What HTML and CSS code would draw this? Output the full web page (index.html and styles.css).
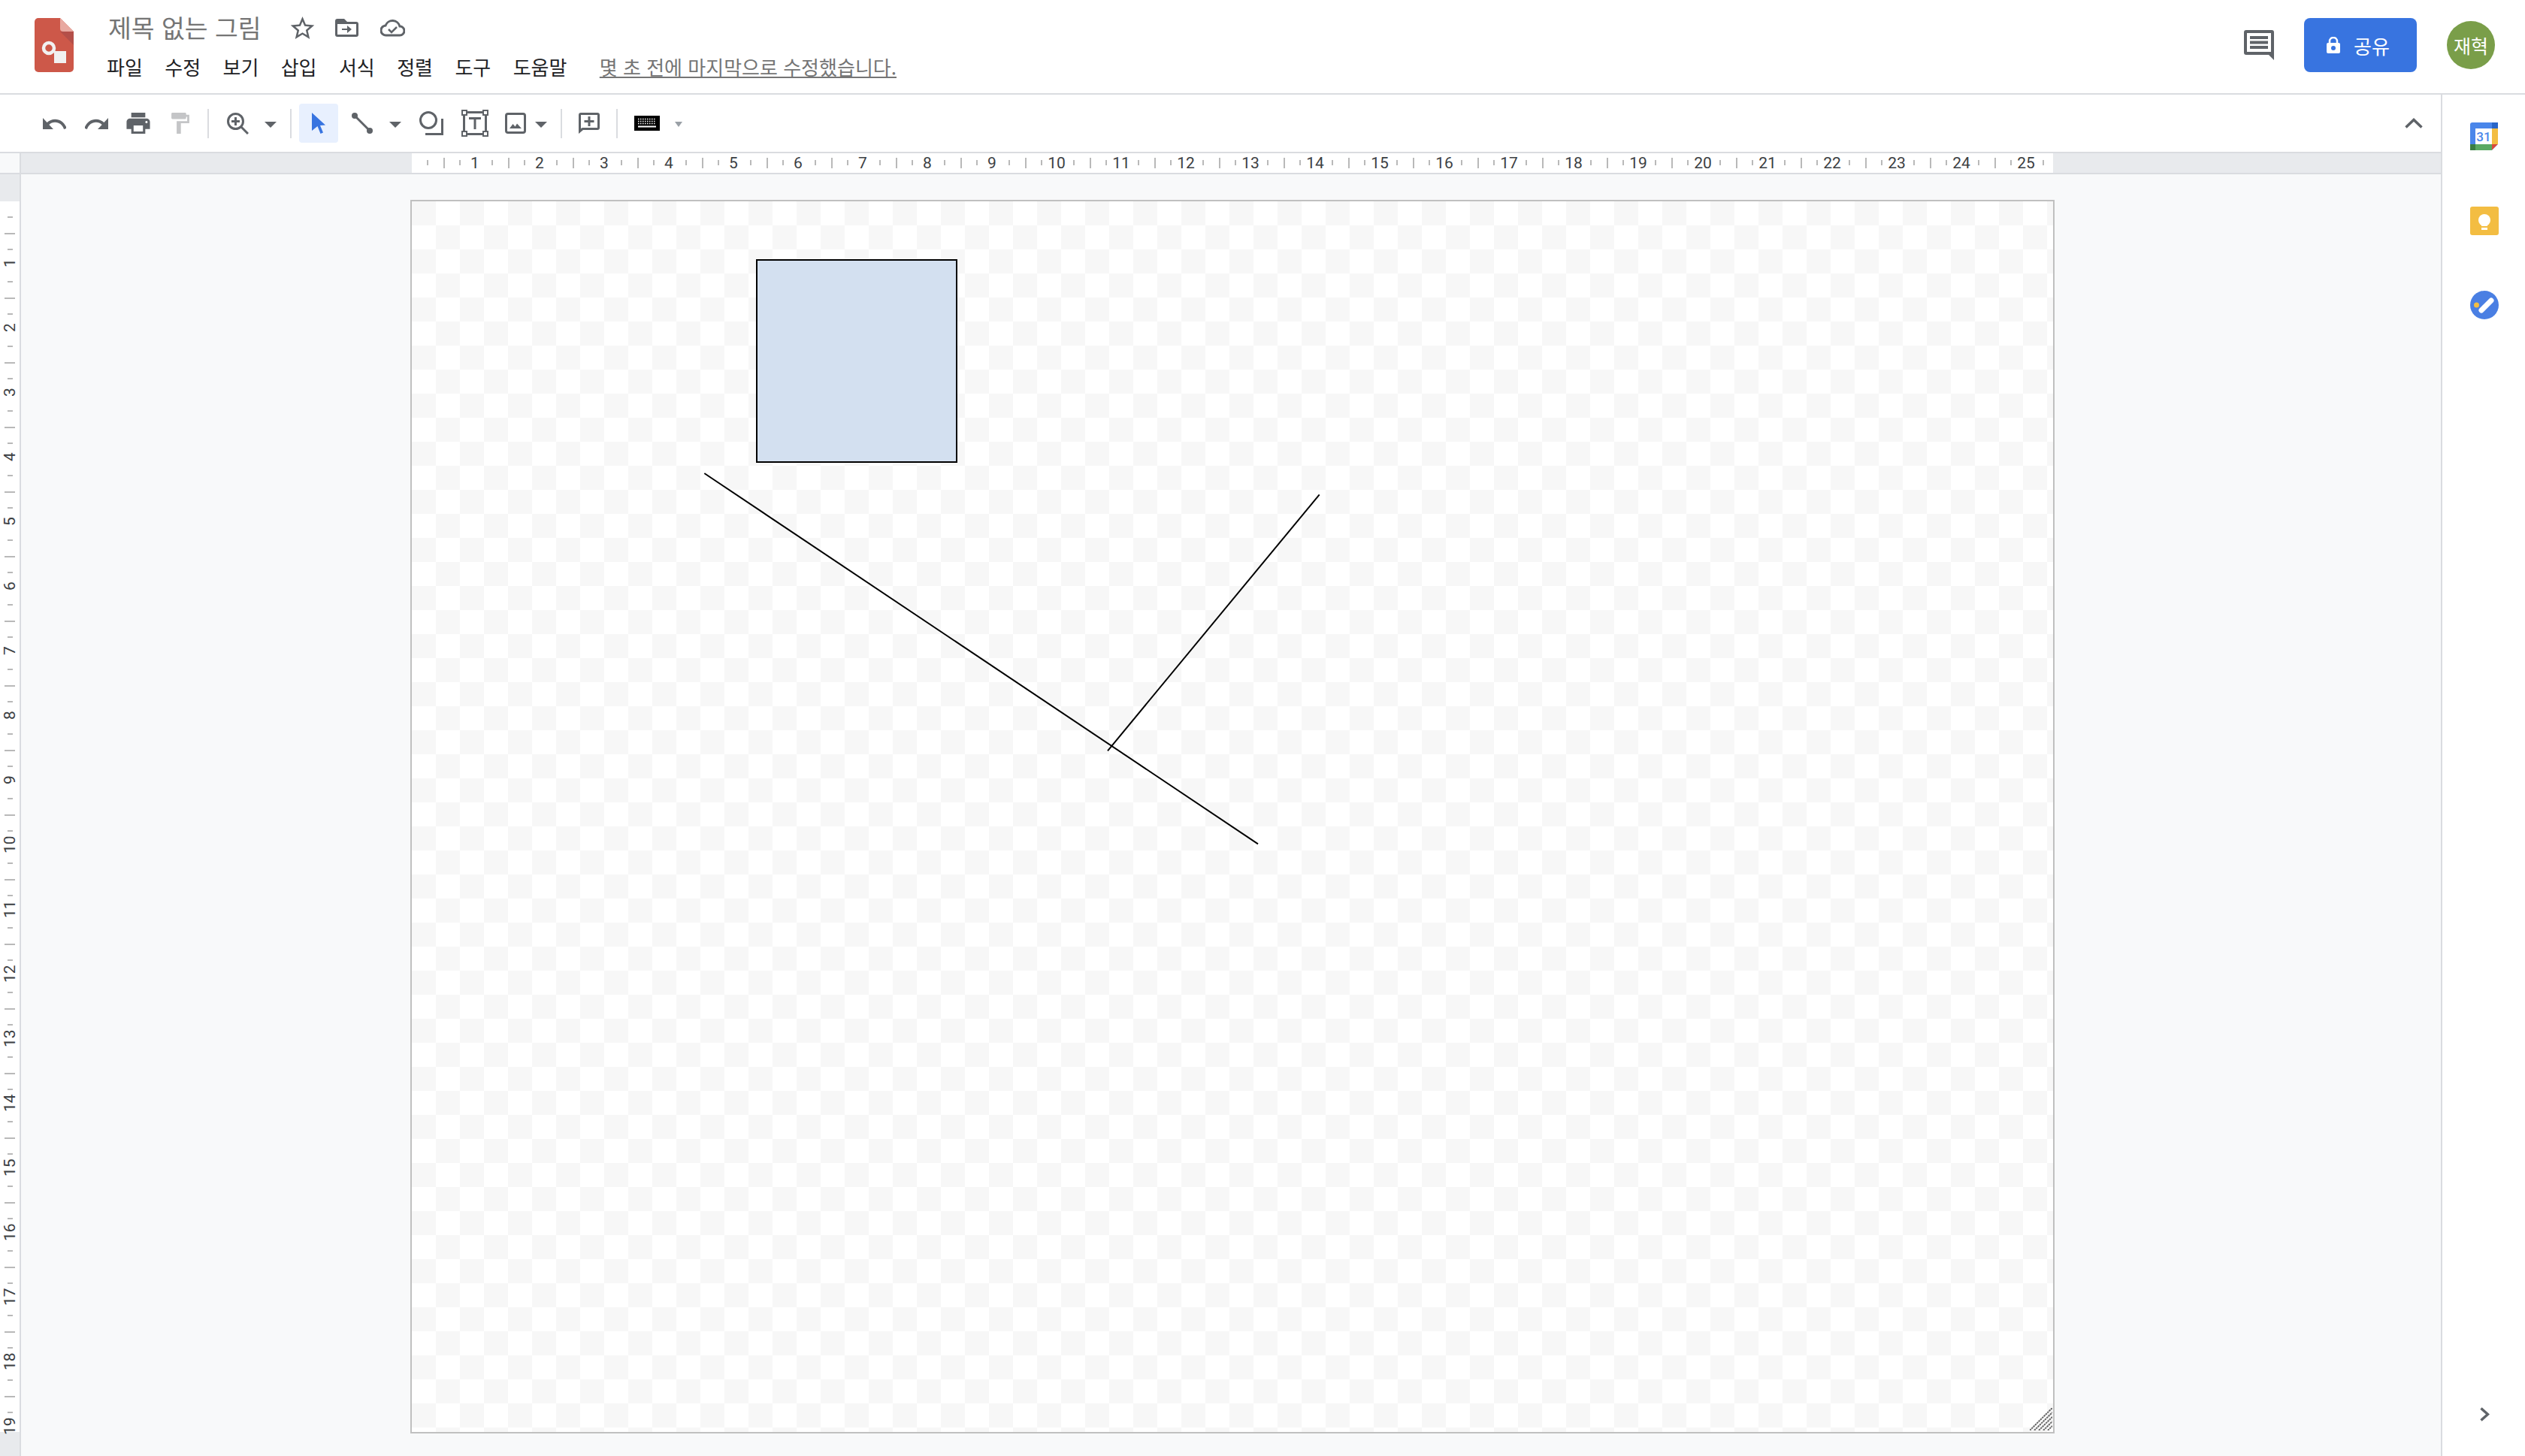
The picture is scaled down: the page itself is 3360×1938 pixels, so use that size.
FILE: index.html
```html
<!DOCTYPE html>
<html lang="ko">
<head>
    <meta charset="UTF-8">
    <title>제목 없는 그림 - Google Drawings</title>
    <link rel="stylesheet" href="styles.css">
</head>
<body>
    <header class="topbar">
        <svg class="logo" width="52" height="72" viewBox="0 0 52 72">
            <path fill="#cd5849" d="M5 0h29l18 18v49a5 5 0 0 1-5 5H5a5 5 0 0 1-5-5V5a5 5 0 0 1 5-5z"/>
            <path fill="#b44f49" d="M34 18h18v18z"/>
            <path fill="#e8a9a1" d="M34 0l18 18H38a4 4 0 0 1-4-4z"/>
            <circle cx="19" cy="40" r="7" fill="none" stroke="#f1f1f1" stroke-width="4.5"/>
            <rect x="26" y="44" width="16" height="16" fill="#f1f1f1"/>
        </svg>
        <div class="doc-info">
            <div class="title-row">
                <span class="doc-title">제목 없는 그림</span>
                <svg class="title-star" width="33" height="30" viewBox="2 2 20 19"><path class="ic" d="M22 9.24l-7.19-.62L12 2 9.19 8.63 2 9.24l5.46 4.73L5.82 21 12 17.27 18.18 21l-1.63-7.03L22 9.24zM12 15.4l-3.76 2.27 1-4.28-3.32-2.88 4.38-.38L12 6.1l1.71 4.04 4.38.38-3.32 2.88 1 4.28L12 15.4z"/></svg>
                <svg class="title-folder" width="31" height="24" viewBox="0 0 31 24">
                    <path class="ic" fill-rule="evenodd" d="M3 0h9l4 4h12a3 3 0 0 1 3 3v14a3 3 0 0 1-3 3H3a3 3 0 0 1-3-3V3a3 3 0 0 1 3-3zM3 7v14h25V7z"/>
                    <path class="ic" d="M9 13h7v-4l6 5-6 5v-4H9z"/>
                </svg>
                <svg class="title-cloud" width="33" height="24" viewBox="0 0 33 24">
                    <path fill="none" stroke="#5f6368" stroke-width="3" d="M8 22a6.5 6.5 0 0 1-1-13 10 10 0 0 1 19 1 6 6 0 0 1 0 12z"/>
                    <path fill="none" stroke="#5f6368" stroke-width="2.5" d="M11 14l4 4 7-7"/>
                </svg>
            </div>
            <nav class="menu">
                <span>파일</span><span>수정</span><span>보기</span><span>삽입</span><span>서식</span><span>정렬</span><span>도구</span><span>도움말</span>
                <a class="last-edit">몇 초 전에 마지막으로 수정했습니다.</a>
            </nav>
        </div>
        <div class="top-actions">
            <svg width="40" height="40" viewBox="0 0 40 40">
                <path class="ic" fill-rule="evenodd" d="M3 0h34a3 3 0 0 1 3 3v37l-7-7H3a3 3 0 0 1-3-3V3a3 3 0 0 1 3-3zM4 4v25h32V4z"/>
                <rect class="ic" x="8" y="8" width="24" height="4"/>
                <rect class="ic" x="8" y="14.500" width="24" height="4"/>
                <rect class="ic" x="8" y="21" width="24" height="4"/>
            </svg>
            <button class="share-btn">
                <svg width="18" height="22" viewBox="0 0 18 22">
                    <path fill="none" stroke="#fff" stroke-width="2.500" d="M4 9V6a5 5 0 0 1 10 0v3"/>
                    <rect y="8" width="18" height="14" rx="2" fill="#fff"/>
                    <circle cx="9" cy="15" r="3" fill="#3874e0"/>
                </svg>
                <span>공유</span>
            </button>
            <div class="avatar">재혁</div>
        </div>
    </header>

    <div class="below">
        <div class="main">
            <div class="toolbar">
                <div class="tool"><svg width="31" height="15" viewBox="2 7 20 9" preserveAspectRatio="none"><path class="ic" d="M12.500 8c-2.650 0-5.050.99-6.900 2.600L2 7v9h9l-3.620-3.620c1.390-1.160 3.160-1.880 5.120-1.880 3.540 0 6.550 2.310 7.600 5.500l2.370-.78C21.080 11.030 17.150 8 12.500 8z"/></svg></div>
                <div class="tool"><svg width="31" height="15" viewBox="2 7 20 9" preserveAspectRatio="none"><path class="ic" d="M18.400 10.600C16.550 8.990 14.150 8 11.500 8c-4.650 0-8.580 3.030-9.960 7.220L3.900 16c1.050-3.190 4.050-5.500 7.600-5.500 1.950 0 3.730.72 5.120 1.880L13 16h9V7l-3.600 3.600z"/></svg></div>
                <div class="tool"><svg width="32" height="28" viewBox="2 3 20 18"><path class="ic" d="M19 8H5c-1.660 0-3 1.340-3 3v6h4v4h12v-4h4v-6c0-1.660-1.340-3-3-3zm-3 11H8v-5h8v5zm3-7c-.55 0-1-.45-1-1s.45-1 1-1 1 .45 1 1-.45 1-1 1zm-1-9H6v4h12V3z"/></svg></div>
                <div class="tool"><svg width="26" height="28" viewBox="4 2 17 20"><path fill="#c4c5c7" d="M18 4V3c0-.55-.45-1-1-1H5c-.55 0-1 .45-1 1v4c0 .55.45 1 1 1h12c.55 0 1-.45 1-1V6h1v4H9v12h4V12h8V4h-3z"/></svg></div>
                <div class="sep"></div>
                <div class="tool"><svg width="29" height="29" viewBox="0 0 29 29">
                    <circle cx="11.500" cy="11.500" r="10" fill="none" stroke="#5f6368" stroke-width="3"/>
                    <path fill="none" stroke="#5f6368" stroke-width="3" d="M19 19l9 9M6 11.500h11M11.500 6v11"/>
                </svg></div>
                <svg class="caret" width="16" height="8" viewBox="0 0 16 8"><path class="ic" d="M0 0h16L8 8z"/></svg>
                <div class="sep sep-after-caret"></div>
                <div class="tool tool-active"><svg width="18" height="28" viewBox="0 0 18 28"><path fill="#3874e0" d="M0 0l18 16.500-7 .5 4 9.500-3.500 1.500-4-10L0 24z"/></svg></div>
                <div class="tool tool-line"><svg width="28" height="28" viewBox="0 0 28 28">
                    <path stroke="#5f6368" stroke-width="3" d="M4 4l20 20"/>
                    <circle class="ic" cx="4" cy="4" r="4"/>
                    <circle class="ic" cx="24" cy="24" r="4"/>
                </svg></div>
                <svg class="caret" width="16" height="8" viewBox="0 0 16 8"><path class="ic" d="M0 0h16L8 8z"/></svg>
                <div class="tool tool-shape"><svg width="32" height="32" viewBox="0 0 32 32">
                    <circle cx="12" cy="12" r="10.500" fill="none" stroke="#5f6368" stroke-width="3"/>
                    <path fill="none" stroke="#5f6368" stroke-width="3" d="M30.500 10v20.500H8"/>
                </svg></div>
                <div class="tool tool-text"><svg width="36" height="36" viewBox="0 0 36 36">
                    <rect x="3.500" y="3.500" width="29" height="29" fill="none" stroke="#5f6368" stroke-width="3"/>
                    <g fill="#fff" stroke="#5f6368" stroke-width="2">
                        <rect x="1" y="1" width="6" height="6"/>
                        <rect x="29" y="1" width="6" height="6"/>
                        <rect x="1" y="29" width="6" height="6"/>
                        <rect x="29" y="29" width="6" height="6"/>
                    </g>
                    <rect class="ic" x="10" y="10" width="16" height="3"/>
                    <rect class="ic" x="16.500" y="10" width="3" height="16"/>
                </svg></div>
                <div class="tool tool-image"><svg width="28" height="28" viewBox="0 0 28 28">
                    <rect x="1.500" y="1.500" width="25" height="25" rx="2.500" fill="none" stroke="#5f6368" stroke-width="3"/>
                    <path class="ic" d="M6 21l4.500-6 3 3.500 2.500-4 6 6.500z"/>
                </svg></div>
                <svg class="caret caret-image" width="16" height="8" viewBox="0 0 16 8"><path class="ic" d="M0 0h16L8 8z"/></svg>
                <div class="sep"></div>
                <div class="tool tool-comment"><svg width="28" height="28" viewBox="0 0 28 28">
                    <path class="ic" fill-rule="evenodd" d="M3 0h22a3 3 0 0 1 3 3v17a3 3 0 0 1-3 3H6l-6 5V3a3 3 0 0 1 3-3zM3 3v18l2-1h20V3z"/>
                    <path class="ic" d="M12.500 5h3v5h5v3h-5v5h-3v-5h-5v-3h5z"/>
                </svg></div>
                <div class="sep"></div>
                <div class="tool tool-keys"><svg width="34" height="20" viewBox="0 0 34 20">
                    <rect width="34" height="20"/>
                    <g stroke="#fff" stroke-width="1.500" stroke-dasharray="1.500 1.500">
                        <path d="M5 4.500h24M5 7.500h24M5 10.500h24"/>
                    </g>
                    <rect x="5" y="13.500" width="24" height="2" fill="#fff"/>
                </svg></div>
                <svg class="caret caret-keys" width="10" height="7" viewBox="0 0 10 7"><path fill="#9aa0a6" d="M0 0h10L5 7z"/></svg>
                <svg class="collapse" width="24" height="14" viewBox="0 0 24 14"><path fill="none" stroke="#5f6368" stroke-width="3.500" d="M1.500 12.500L12 2.500l10.500 10"/></svg>
            </div>

            <div class="ruler-row">
                <div class="ruler-corner"></div>
                <div class="ruler-h">
                    <span>1</span><span>2</span><span>3</span><span>4</span><span>5</span><span>6</span><span>7</span><span>8</span><span>9</span><span>10</span><span>11</span><span>12</span><span>13</span><span>14</span><span>15</span><span>16</span><span>17</span><span>18</span><span>19</span><span>20</span><span>21</span><span>22</span><span>23</span><span>24</span><span>25</span>
                </div>
            </div>

            <div class="work">
                <div class="ruler-v-wrap">
                    <div class="ruler-v">
                        <span>1</span><span>2</span><span>3</span><span>4</span><span>5</span><span>6</span><span>7</span><span>8</span><span>9</span><span>10</span><span>11</span><span>12</span><span>13</span><span>14</span><span>15</span><span>16</span><span>17</span><span>18</span><span>19</span>
                    </div>
                </div>
                <div class="workspace">
                    <div class="canvas">
                        <svg class="drawing" viewBox="0 0 2184 1638">
                            <rect x="459" y="78" width="266" height="269" fill="#d3e0f0" stroke="#000" stroke-width="2"/>
                            <line x1="389.300" y1="362" x2="1126" y2="855.300" stroke="#000" stroke-width="2"/>
                            <line x1="1207.700" y1="390.300" x2="926" y2="731.300" stroke="#000" stroke-width="2"/>
                        </svg>
                        <svg class="resize" width="30" height="30" viewBox="0 0 30 30">
                            <path fill="none" stroke="#666" stroke-width="2" stroke-dasharray="2.500 .8" d="M0 30L30 0M6 30L30 6M12 30L30 12M18 30L30 18M24 30L30 24"/>
                        </svg>
                    </div>
                </div>
            </div>
        </div>

        <aside class="side">
            <svg width="38" height="38" viewBox="0 0 38 38">
                <rect width="37" height="37" rx="3" fill="#4a86ea"/>
                <rect x="29" y="0" width="8" height="8" fill="#2a66c8"/>
                <rect x="29" y="8" width="8" height="21" fill="#f3bd42"/>
                <rect x="7" y="29" width="22" height="8" fill="#5aa962"/>
                <rect x="0" y="29" width="7" height="8" fill="#3a7e43"/>
                <path fill="#d9493c" d="M29 29h8l-8 8z"/>
                <path fill="#fff" d="M37 29v8h-8z"/>
                <rect x="7" y="8" width="22" height="21" fill="#fff"/>
                <text class="cal-num" x="18" y="25">31</text>
            </svg>
            <svg width="38" height="38" viewBox="0 0 38 38">
                <rect width="38" height="38" rx="3" fill="#f3bd42"/>
                <circle cx="19" cy="18" r="8" fill="#fff"/>
                <rect x="15" y="22" width="8" height="4" fill="#fff"/>
                <rect x="15" y="28" width="8" height="3" fill="#fff"/>
            </svg>
            <svg width="38" height="38" viewBox="0 0 38 38">
                <circle cx="19" cy="19" r="19" fill="#4a7fe3"/>
                <path stroke="#fff" stroke-width="7" stroke-linecap="round" d="M15 26l13-13"/>
                <circle cx="8.500" cy="19" r="3.500" fill="#f3bd42"/>
            </svg>
            <svg class="side-more" width="13" height="19" viewBox="0 0 13 19"><path fill="none" stroke="#5f6368" stroke-width="3.500" d="M1.500 1.500l9 8-9 8"/></svg>
        </aside>
    </div>
</body>
</html>
```

FILE: styles.css
```css
* {
    box-sizing: border-box;
}
html, body {
    margin: 0;
    height: 100%;
    overflow: hidden;
}
body {
    display: flex;
    flex-direction: column;
    height: 1938px;
    background: #fff;
    font-family: "Noto Sans CJK KR", "Liberation Sans", sans-serif;
}
svg {
    display: block;
    flex-shrink: 0;
}
.ic {
    fill: #5f6368;
}

/* top bar */
.topbar {
    height: 126px;
    flex-shrink: 0;
    display: flex;
    border-bottom: 2px solid #dadce0;
    padding-left: 46px;
}
.logo {
    margin-top: 24px;
}
.doc-info {
    margin-left: 44px;
    display: flex;
    flex-direction: column;
}
.title-row {
    display: flex;
    align-items: center;
    height: 40px;
    margin-top: 16px;
    padding-left: 2px;
}
.doc-title {
    font-size: 33.500px;
    line-height: 40px;
    color: #757575;
    width: 242px;
    white-space: nowrap;
}
.title-star {
    margin-top: 2px;
}
.title-folder {
    margin-left: 27px;
    margin-top: 2px;
}
.title-cloud {
    margin-left: 29px;
    margin-top: 2px;
}
.menu {
    display: flex;
    align-items: center;
    gap: 29.400px;
    margin-top: 15px;
    font-size: 26px;
    line-height: 36px;
    color: #202124;
}
.last-edit {
    margin-left: 14px;
    color: #757575;
    font-size: 26px;
    text-decoration: underline;
    white-space: nowrap;
}
.top-actions {
    margin-left: auto;
    display: flex;
    align-items: center;
    height: 124px;
    padding-right: 40px;
    padding-bottom: 4px;
}
.share-btn {
    width: 150px;
    height: 72px;
    margin-left: 40px;
    background: #3874e0;
    border: none;
    border-radius: 8px;
    color: #fff;
    font-family: inherit;
    font-size: 26px;
    display: flex;
    align-items: center;
    justify-content: flex-start;
    gap: 18px;
    padding: 0 0 0 30px;
}
.avatar {
    width: 64px;
    height: 64px;
    margin-left: 40px;
    border-radius: 50%;
    background: #7a9e49;
    color: #fff;
    font-size: 25px;
    display: flex;
    align-items: center;
    justify-content: center;
}

.below {
    flex: 1;
    display: flex;
    min-height: 0;
}
.main {
    flex: 1;
    display: flex;
    flex-direction: column;
    min-width: 0;
}

/* toolbar */
.toolbar {
    height: 78px;
    flex-shrink: 0;
    display: flex;
    align-items: center;
    padding-left: 42px;
    padding-right: 24px;
    border-bottom: 2px solid #dadce0;
}
.tool {
    width: 52px;
    height: 52px;
    margin-left: 4px;
    border-radius: 4px;
    display: flex;
    align-items: center;
    justify-content: center;
}
.tool-active {
    margin-left: 2px;
    background: #e8f0fe;
}
.tool-line {
    margin-left: 6px;
}
.tool-shape {
    margin-left: 6px;
}
.tool-text {
    margin-left: 6px;
}
.tool-image {
    width: 44px;
    margin-left: 6px;
}
.tool-comment {
    margin-left: 2px;
}
.tool-keys {
    margin-left: 5px;
}
.sep {
    width: 2px;
    height: 39px;
    margin: 0 8px 0 10px;
    background: #dadce0;
}
.caret {
    margin: 4px 8px 0 10px;
}
.caret-image {
    margin-left: 4px;
}
.caret-keys {
    margin: 2px 0 0 11px;
}
.collapse {
    margin-left: auto;
}

/* rulers */
.ruler-row {
    height: 28px;
    flex-shrink: 0;
    display: flex;
    background: #e8eaed;
    border-bottom: 2px solid #dadce0;
}
.ruler-corner {
    width: 28px;
    background: #f8f9fa;
    border-right: 2px solid #dadce0;
}
.ruler-h {
    width: 2184px;
    margin-left: 520px;
    padding-left: 41px;
    display: flex;
    overflow: hidden;
    background-color: #fff;
    background-image:
        linear-gradient(90deg, transparent 20px, #b9b9b9 20px, #b9b9b9 22px, transparent 22px, transparent 63px, #b9b9b9 63px, #b9b9b9 65px, transparent 65px),
        linear-gradient(90deg, transparent 42px, #b9b9b9 42px, #b9b9b9 44px, transparent 44px);
    background-size: 86px 7px, 86px 14px;
    background-position: 0 9px, 0 6px;
    background-repeat: repeat-x;
}
.ruler-h span {
    flex: 0 0 86px;
    text-align: center;
    font-family: Roboto, "Liberation Sans", sans-serif;
    font-size: 21px;
    line-height: 26px;
    color: #3c4043;
}
.work {
    flex: 1;
    display: flex;
    min-height: 0;
}
.ruler-v-wrap {
    width: 28px;
    flex-shrink: 0;
    overflow: hidden;
    background: #e8eaed;
    border-right: 2px solid #dadce0;
    padding-top: 36px;
}
.ruler-v {
    height: 1638px;
    padding-top: 39px;
    display: flex;
    flex-direction: column;
    background-color: #fff;
    background-image:
        linear-gradient(180deg, transparent 20px, #b9b9b9 20px, #b9b9b9 22px, transparent 22px, transparent 63px, #b9b9b9 63px, #b9b9b9 65px, transparent 65px),
        linear-gradient(180deg, transparent 42px, #b9b9b9 42px, #b9b9b9 44px, transparent 44px);
    background-size: 7px 86px, 14px 86px;
    background-position: 10px 0, 6px 0;
    background-repeat: repeat-y;
}
.ruler-v span {
    flex: 0 0 86px;
    writing-mode: vertical-rl;
    transform: rotate(180deg);
    text-align: center;
    font-family: Roboto, "Liberation Sans", sans-serif;
    font-size: 21px;
    line-height: 26px;
    color: #3c4043;
}

/* canvas */
.workspace {
    flex: 1;
    background: #f8f9fa;
    padding: 34px 0 0 518px;
}
.canvas {
    position: relative;
    width: 2188px;
    height: 1642px;
    border: 2px solid #c0c0c0;
    background: repeating-conic-gradient(#fff 0 25%, #f7f7f7 0 50%) 0 0 / 64px 64px;
}
.drawing {
    width: 2184px;
    height: 1638px;
}
.resize {
    position: absolute;
    right: 1px;
    bottom: 2px;
}

/* right side panel */
.side {
    width: 112px;
    flex-shrink: 0;
    display: flex;
    flex-direction: column;
    align-items: center;
    gap: 74px;
    padding: 37px 0 46px 2px;
    border-left: 2px solid #dadce0;
}
.cal-num {
    font-family: Roboto, "Liberation Sans", sans-serif;
    font-size: 17px;
    font-weight: 500;
    fill: #4a86ea;
    text-anchor: middle;
}
.side-more {
    margin-top: auto;
}
```
